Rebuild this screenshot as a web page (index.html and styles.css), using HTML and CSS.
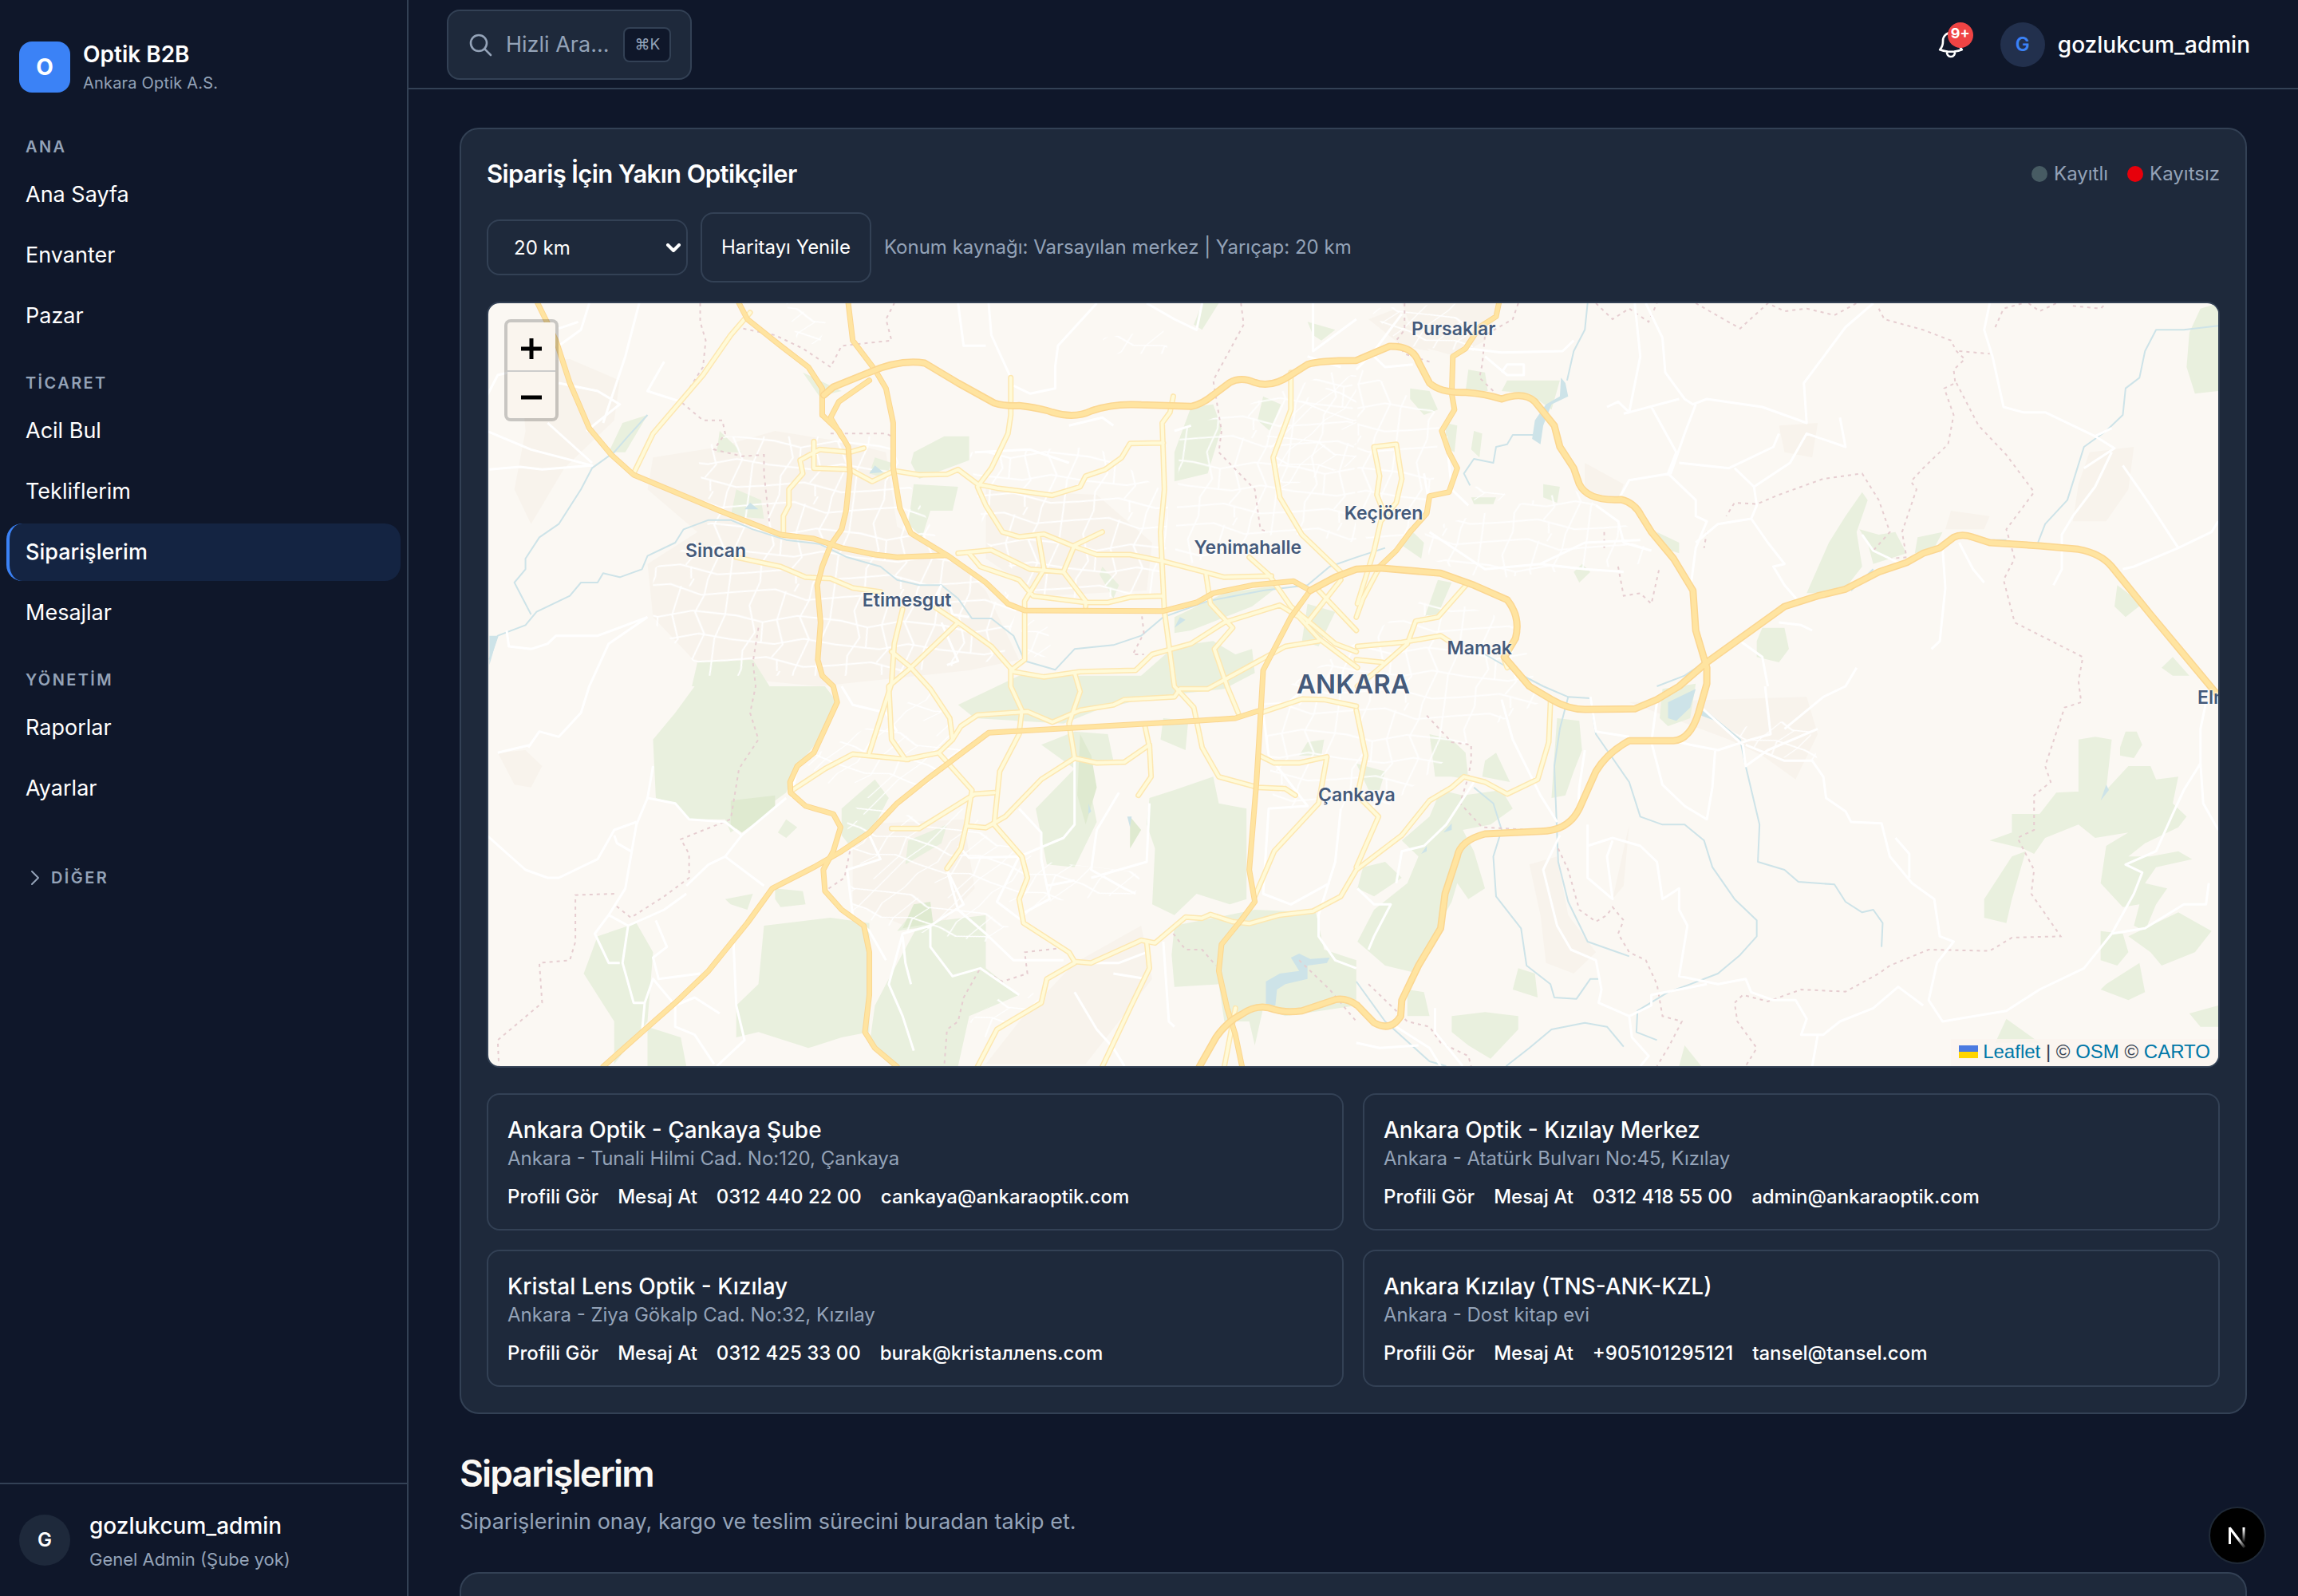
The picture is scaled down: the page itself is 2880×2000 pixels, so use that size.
FILE: index.html
```html
<!DOCTYPE html>
<html lang="tr">
<head>
<meta charset="utf-8">
<title>Optik B2B - Siparişlerim</title>
<link rel="stylesheet" href="styles.css">
</head>
<body>
<div class="app">
  <aside class="sidebar">
    <div class="brand">
      <div class="brand-logo">O</div>
      <div class="brand-text">
        <strong class="brand-name">Optik B2B</strong>
        <span class="brand-org">Ankara Optik A.S.</span>
      </div>
    </div>
    <nav class="nav">
      <h2 class="nav-label">ANA</h2>
      <a class="nav-item" href="#">Ana Sayfa</a>
      <a class="nav-item" href="#">Envanter</a>
      <a class="nav-item" href="#">Pazar</a>
      <h2 class="nav-label">TİCARET</h2>
      <a class="nav-item" href="#">Acil Bul</a>
      <a class="nav-item" href="#">Tekliflerim</a>
      <a class="nav-item active" href="#">Siparişlerim</a>
      <a class="nav-item" href="#">Mesajlar</a>
      <h2 class="nav-label">YÖNETİM</h2>
      <a class="nav-item" href="#">Raporlar</a>
      <a class="nav-item" href="#">Ayarlar</a>
      <button class="nav-more" type="button">
        <svg width="24" height="24" viewBox="0 0 24 24" fill="none" stroke="currentColor" stroke-width="2" stroke-linecap="round" stroke-linejoin="round"><path d="M8 4l8 8-8 8"/></svg>
        DİĞER
      </button>
    </nav>
    <div class="account">
      <div class="avatar avatar-lg">G</div>
      <div class="account-text">
        <span class="account-name">gozlukcum_admin</span>
        <span class="account-role">Genel Admin (Şube yok)</span>
      </div>
    </div>
  </aside>

  <div class="page">
    <header class="topbar">
      <button class="search" type="button">
        <svg width="32" height="32" viewBox="0 0 32 32" fill="none" stroke="currentColor" stroke-width="2.6" stroke-linecap="round"><circle cx="14" cy="14" r="10"/><path d="M21.400 21.400L29 29"/></svg>
        <span class="search-text">Hizli Ara...</span>
        <kbd class="kbd">⌘K</kbd>
      </button>
      <div class="topbar-right">
        <button class="bell" type="button" aria-label="Bildirimler">
          <svg width="40" height="40" viewBox="0 0 24 24" fill="none" stroke="currentColor" stroke-width="1.600" stroke-linecap="round" stroke-linejoin="round"><path d="M14.857 17.082a23.848 23.848 0 0 0 5.454-1.310A8.967 8.967 0 0 1 18 9.750V9A6 6 0 0 0 6 9v.750a8.967 8.967 0 0 1-2.312 6.022c1.733.640 3.560 1.085 5.455 1.310m5.714 0a24.255 24.255 0 0 1-5.714 0m5.714 0a3 3 0 1 1-5.714 0"/></svg>
          <span class="bell-count">9+</span>
        </button>
        <button class="user" type="button">
          <span class="avatar avatar-sm">G</span>
          <span class="user-name">gozlukcum_admin</span>
        </button>
      </div>
    </header>

    <main class="content">
      <section class="panel">
        <div class="panel-head">
          <h2 class="panel-title">Sipariş İçin Yakın Optikçiler</h2>
          <ul class="legend">
            <li><span class="dot dot-known"></span>Kayıtlı</li>
            <li><span class="dot dot-unknown"></span>Kayıtsız</li>
          </ul>
        </div>
        <div class="filters">
          <div class="select-wrap">
            <select class="select" aria-label="Yarıçap"><option>20 km</option></select>
            <svg class="select-arrow" width="20" height="12" viewBox="0 0 20 12" fill="none" stroke="currentColor" stroke-width="4" stroke-linecap="round" stroke-linejoin="round"><path d="M3 2l7 7 7-7"/></svg>
          </div>
          <button class="refresh" type="button">Haritayı Yenile</button>
          <span class="source">Konum kaynağı: Varsayılan merkez | Yarıçap: 20 km</span>
        </div>

        <div class="map">
          <svg class="map-art" viewBox="3 0 3119 2868" preserveAspectRatio="none" aria-hidden="true">
            <defs>
              <pattern id="streets" width="190" height="330" patternUnits="userSpaceOnUse" patternTransform="rotate(6)">
                <path class="street thin" d="M0 40L60 25 120 60 190 40M0 130L50 150 110 120 190 130M0 220L80 230 130 205 190 220M0 300L70 280 140 310 190 300M30 0L20 90 40 190 25 260 30 330M80 30L75 140 95 230 80 280M125 60L115 125 140 205 125 330M125 0L125 60M165 0L170 130 160 220 165 330M95 30L100 0M95 330L90 285M50 150L55 225"/>
              </pattern>
              <pattern id="streets-tilt" width="190" height="330" patternUnits="userSpaceOnUse" patternTransform="rotate(28) scale(.8)">
                <path class="street thin" d="M0 40L60 25 120 60 190 40M0 130L50 150 110 120 190 130M0 220L80 230 130 205 190 220M30 0L20 90 40 190 25 260 30 330M80 30L75 140 95 230 80 280M125 60L115 125 140 205 140 330M165 0L170 130 160 220 165 330"/>
              </pattern>
            </defs>

            <!-- built-up areas -->
            <g class="urban">
              <path d="M60 220L150 210 240 290 230 440 140 620 80 830 50 700 70 480zM300 580L420 540 520 480 640 520 720 560 740 840 830 940 900 1080 960 1340 870 1380 600 1440 400 1400 300 1180 290 980 380 860 290 700z"/>
              <path d="M1650 0L1830 0 1800 140 1750 200 1680 160zM1590 60L1640 20 1700 180 1650 160zM900 700L1100 720 1200 900 1190 1080 1000 1100 900 960zM2060 1500L2380 1480 2400 1620 2360 1790 2300 1700 2240 1640zM1880 2110L1930 2080 1950 2300 2000 2440 1960 2520 1910 2480 1900 2300z"/>
              <path d="M660 1960L860 1940 880 2200 800 2380 660 2260zM1060 2480L1180 2340 1200 2540 1080 2860 900 2860 960 2700zM20 1690L70 1680 100 1740 80 1820 50 1810zM2890 560L2970 540 2960 700 2920 820 2860 820 2870 680zM2330 460L2400 450 2390 580 2340 560zM1980 600L2050 680 2040 740 1980 700zM2640 780L2710 800 2700 850 2630 850zM2060 1960L2050 2190 2030 2240z"/>
            </g>

            <!-- woods and parks -->
            <g class="green">
              <path d="M375 1440L610 1440 632 1500 600 1640 560 1740 540 1840 440 1990 430 1940 365 1940 340 1880 305 1860 300 1640 340 1540zM380 1350L480 1340 510 1440 370 1440zM420 480L460 560 415 560zM290 420L250 560 220 560 245 450zM450 700L495 740 500 810 440 800zM770 560L825 500 870 500 870 590 780 660 765 600zM770 680L850 690 840 780 800 780 785 880 760 830zM570 260L640 330 600 350zM700 580L730 600 720 660 690 640z"/>
              <path d="M1270 390L1310 380 1325 470 1300 640 1240 670 1240 560zM1400 350L1432 380 1412 480 1390 440zM1290 0L1320 0 1290 100 1275 80zM1480 70L1530 100 1505 140 1490 120zM1110 990L1140 1060 1130 1110 1105 1020zM1240 1180L1330 1090 1430 1060 1380 1140 1270 1230 1240 1240zM1350 1320L1380 1300 1385 1390 1330 1450 1200 1480 1100 1530 1040 1580 880 1560 850 1510 960 1400 1180 1400 1240 1290 1310 1270zM1480 1130L1530 1160 1500 1290 1470 1270z"/>
              <path d="M1000 1660L1060 1610 1120 1620 1130 1720 1080 1740 1100 1950 1060 2120 1010 2110 990 1900 1060 1750zM1220 1560L1265 1570 1260 1680 1215 1640zM1195 1860L1240 1830 1310 1780 1320 1880 1370 1900 1370 2240 1340 2260 1280 2220 1240 2300 1200 2260 1205 2050 1190 1960zM1240 2340L1385 2280 1495 2290 1510 2430 1568 2470 1568 2640 1440 2680 1400 2650 1385 2790 1375 2700 1330 2700 1320 2560 1240 2570 1235 2450zM1480 1650L1510 1640 1505 1700 1465 1700z"/>
              <path d="M640 1900L700 1790 725 1860 700 1960 655 2040 640 2000zM540 1940L560 1970 540 2010 525 1990zM520 2200L570 2210 575 2260 530 2270 520 2240zM430 2240L480 2220 470 2280 440 2260zM760 2020L830 1960 820 2030 755 2110zM500 2340L620 2310 690 2330 690 2740 640 2760 580 2800 490 2740 450 2760 450 2640 490 2560zM780 2260L800 2260 800 2340 740 2360zM720 2560L780 2330 900 2300 900 2500 960 2600 870 2680 850 2868 730 2868 690 2790 700 2640zM200 2380L270 2330 300 2440 290 2700 230 2860 230 2700 175 2520zM290 2720L350 2760 360 2868 290 2868z"/>
              <path d="M1665 320L1700 330 1715 400 1690 420 1665 360zM1840 290L1935 290 1920 400 1880 340 1830 330zM1770 250L1800 260 1805 330 1765 330zM1730 450L1750 460 1745 560 1728 540zM1780 480L1795 490 1790 580 1775 550zM1905 680L1935 690 1930 750 1905 730zM1775 730L1820 730 1815 755 1780 755zM1670 860L1690 900 1685 960 1650 910zM1715 1040L1740 1050 1715 1170 1692 1175zM1960 1010L1975 980 1990 1010 1970 1050zM2110 860L2150 900 2150 940 2120 920z"/>
              <path d="M2480 710L2490 740 2470 860 2480 990 2450 1070 2400 1090 2380 1090 2420 900 2450 800zM2475 850L2510 870 2540 860 2560 940 2500 980 2490 900zM2580 880L2625 860 2610 920 2575 940zM2300 1220L2340 1220 2348 1300 2330 1350 2290 1330 2290 1270zM2940 1060L2985 1130 2955 1180 2935 1140zM3040 1330L3070 1400 3040 1400 3020 1370zM3090 20L3122 0 3122 330 3080 340 3065 240 3070 110z"/>
              <path d="M2120 1450L2180 1430 2170 1560 2130 1590 2115 1560zM1700 1620L1740 1640 1765 1690 1770 1790 1740 1780 1710 1780zM1800 1720L1820 1690 1845 1800 1795 1780zM1930 1560L1970 1570 1975 1680 1960 1760 1945 1850 1920 1860 1925 1700zM1760 1850L1830 1830 1850 1900 1810 1960 1760 1980 1780 2060 1800 2200 1770 2240 1750 2180 1740 2250 1700 2400 1680 2520 1620 2490 1570 2400 1600 2280 1660 2180 1680 2080 1650 2020 1700 1930 1720 1830zM1580 2120L1620 2100 1650 2160 1600 2230 1570 2200zM1660 2580L1690 2590 1700 2680 1660 2680zM1860 2500L1890 2520 1895 2610 1850 2580zM1740 2680L1800 2665 1860 2680 1860 2730 1810 2840 1770 2790 1740 2740z"/>
              <path d="M2870 1640L2900 1630 2930 1640 2920 1830 2870 1860zM2945 1670L2955 1610 2975 1610 2985 1660 2970 1710 2945 1700zM2920 1830L2960 1740 3000 1740 3010 1790 3050 1780 3040 1880 3065 1930 3050 1970 2990 2030 2960 2080 3000 2080 3050 2060 3075 2090 3010 2120 2990 2180 3030 2200 3010 2260 2990 2360 2970 2340 2980 2260 2950 2270 2910 2180 2920 2040 2960 1990 2900 2010 2870 1960 2810 2010 2790 2070 2770 2050 2710 2020 2750 1990 2750 1920 2800 1920 2830 1840zM2750 2080L2775 2060 2750 2240 2740 2330 2700 2310 2700 2240zM2960 2380L2990 2350 3050 2290 3110 2360 3080 2440 3020 2490 3000 2440zM2910 2360L2950 2370 2960 2440 2940 2490 2910 2470zM2920 2560L2980 2480 2990 2590 2960 2620 2910 2580zM3070 2670L3122 2640 3122 2720 3090 2720zM2740 2690L2800 2780 2720 2780zM2160 2790L2190 2868 2150 2868zM1568 1730L1620 1760 1610 1830 1590 1830z"/>
            </g>
            <g class="green-deep">
              <path d="M440 1870L520 1850 520 1900 460 1990 440 1960zM770 2260L800 2250 805 2330 750 2350zM1070 1620L1090 1700 1100 1820 1080 1960 1065 1850zM1160 1930L1180 1980 1160 2050z"/>
            </g>

            <!-- local street texture in the dense districts -->
            <path fill="url(#streets)" d="M430 500L720 500 820 920 960 1120 930 1340 700 1400 400 1400 300 1200 300 1000 400 860 380 560zM870 560L1100 540 1230 720 1220 1100 1000 1110 900 900z"/>
            <path fill="url(#streets)" opacity=".9" d="M1250 480L1560 230 1568 900 1430 860 1240 1000zM1570 240L1720 420 1700 820 1600 960 1570 800zM1690 850L1960 700 2100 900 2080 980 1880 1020 1800 1040 1700 960zM1400 1500L1700 1100 1860 1200 1900 1500 1800 1600 1620 1900 1420 1900z"/>
            <path fill="url(#streets-tilt)" d="M650 1950L860 1900 960 2060 1010 2100 1180 2140 1170 2220 1010 2250 900 2400 760 2360 660 2300zM570 1720L720 1560 800 1440 860 1700 700 1960zM1400 440L1568 260 1568 600 1430 700zM1590 20L1760 0 1780 180 1650 160zM2240 1600L2380 1560 2400 1720 2300 1700zM870 2700L970 2540 1000 2640 900 2760z"/>
            <path fill="url(#streets-tilt)" d="M540 0L620 0 600 160 560 140zM1110 130L1220 100 1230 190 1120 190zM960 1180L1010 1200 1020 1330 970 1330zM1780 690L1830 680 1840 740 1780 750z"/>

            <!-- rivers, lakes -->
            <g class="river">
              <path d="M290 420L255 500 230 560 190 620 170 700 130 830 95 880 70 960 70 1000 50 1050 80 1170"/>
              <path d="M5 1340L20 1250 70 1210 90 1160 150 1100 170 1050 200 1050 210 1015 240 1030 280 1000 290 950 340 900 355 850 400 815 440 815 480 850 540 890 600 905 650 955 710 990 740 1040 780 1060 820 1060 850 1110 875 1185 910 1185 950 1250 970 1345 1025 1378 1060 1300 1130 1285 1180 1250 1220 1180 1300 1120 1400 1080 1480 1060 1520 990 1568 955 1620 920"/>
              <path d="M1985 0L1980 100 1960 180 1948 290M1890 495L1850 495 1840 530 1820 540 1815 600 1780 585 1762 640 1773 685M3122 85L3060 100 3010 100 2990 180 2980 280 2955 320 2950 420 2920 480 2880 540 2865 640 2850 740 2810 830 2797 900M2690 890L2740 890M1800 1320L1850 1380 1905 1440 1950 1480 1990 1485 2000 1620 2030 1710 2060 1800 2080 1930 2120 1960 2160 1960 2195 2020 2210 2120 2250 2240 2290 2320 2290 2380 2260 2450 2220 2520 2170 2560 2130 2590 2075 2660 2073 2740 2110 2770M2190 1520L2260 1640 2270 1740 2295 1960 2292 2100 2340 2130 2365 2175 2430 2185 2450 2250 2480 2290 2500 2280 2517 2330 2515 2420M1950 1480L1935 1600 1925 1740 1932 2100 1950 2250 1985 2400 2060 2455M1780 1820L1815 1880 1830 1980 1815 2080 1820 2230 1865 2350 1875 2490 1918 2560 1925 2610 1965 2615 1990 2540 2005 2540M1568 2550L1620 2700 1700 2850 1730 2868M1838 2868L1880 2800 1920 2730 1980 2705 2020 2720 2050 2795M2110 1440L2160 1400 2260 1260 2340 1150 2360 1130M2460 1080L2500 1000"/>
            </g>
            <g class="water">
              <path d="M1937 280L1945 300 1950 350 1920 380 1905 460 1900 530 1885 510 1890 440 1910 380 1935 350zM2130 1500L2180 1450 2170 1520 2145 1570 2130 1560zM2190 1520L2215 1570 2190 1550zM1405 2640L1405 2550 1430 2520 1465 2510 1450 2460 1465 2445 1485 2465 1520 2460 1515 2480 1480 2490 1480 2540 1440 2560 1425 2580 1422 2640zM1085 1880L1090 1910 1085 1920zM1155 1930L1163 1930 1160 1970zM2910 1870L2925 1830 2920 1810zM1725 1990L1740 1955 1740 1980zM1685 2070L1695 2040 1695 2060zM690 640L700 610 715 635zM465 775L475 750 490 775zM1240 1220L1250 1180 1260 1190zM5 1360L5 1250 20 1250z"/>
            </g>

            <!-- district boundaries -->
            <g class="boundary">
              <path d="M385 0L385 70 395 140 390 240 350 370 390 440 425 440 430 490 410 550 460 575 500 570 500 640 510 830M450 90L520 120 570 170 620 240 640 160 730 140 720 60 735 0M620 490L720 490 730 500M1360 0L1365 80 1310 290 1325 480 1320 560 1385 700 1395 850 1410 860M1655 0L1655 100 1640 140 1655 190 1700 220M490 1220L480 1350 485 1440 475 1540 490 1640 455 1750 440 1940 350 2015 365 2070 365 2160 320 2230 260 2310 230 2260M230 2220L160 2225 160 2400 150 2470 95 2480 100 2630 60 2700 20 2770 22 2868M655 2060L645 2160 610 2210M1040 2423L970 2440 975 2520 930 2550 890 2500 860 2610 850 2700 830 2730 825 2868M1238 2370L1260 2430 1290 2430 1315 2490M1180 1150L1185 1240 1165 1320 1185 1320"/>
              <path d="M1860 0L1850 60 1800 120 1795 230 1790 280 1815 330M2000 0L2030 60 2060 20 2095 70 2110 0M2180 0L2205 30 2260 95 2310 0 2340 30 2380 20 2430 45 2470 0M2510 20L2520 60 2590 100 2640 140 2650 180 2665 210 2645 250 2648 300 2628 320 2645 420 2635 530 2590 620 2568 670 2578 700 2552 860 2560 955 2530 960 2500 930 2530 860 2510 740 2480 640 2410 660 2330 720 2290 755 2250 750 2235 800M2200 860L2195 920M2015 860L2015 920M2040 990L2050 1100 2080 1090 2100 1130 2115 990M2650 300L2690 460 2740 570 2790 710 2740 850 2755 960 2735 1040 2755 1200 2878 1330 2870 1420 2875 1500 2845 1520 2810 1740 2820 1800 2790 1850 2790 1980 2760 2010 2790 2130 2785 2220 2838 2380 2750 2385 2710 2435 2600 2430 2530 2490 2510 2520 2450 2588 2370 2580 2310 2625 2265 2600 2250 2630 2255 2700 2290 2800 2270 2868M2655 180L2710 190M2720 90L2735 20 2770 0M2780 0L2800 30 2830 0M2860 10L2910 20 2920 0M1695 1550L1740 1650 1775 1660 1775 1720 1770 1780 1755 1880 1795 1970 1880 1980M1932 2050L1950 2130 1970 2280 2000 2325 2020 2300 2030 2270 2050 2320 2040 2370 2060 2440 2090 2470 2110 2560 2120 2680 2155 2700 2130 2800 2110 2868M1590 2560L1660 2700 1700 2720 1720 2780 1770 2830 1775 2868M1465 2470L1520 2580 1568 2700"/>
            </g>

            <!-- minor roads -->
            <g class="street">
              <path d="M275 0L250 200 210 450M165 70L130 95M320 220L290 330 350 370M0 480L80 550 190 610 100 625 60 615 5 625M130 300L200 330 240 380 180 480M110 450L190 600M185 0L170 100 110 190 95 170 80 240 20 270 0 350M20 1690L80 1660M300 1740L290 1860 270 1960 250 2200 220 2300 195 2370 220 2480 240 2480M0 2000L70 2130 110 2160 130 2160 200 2090 230 1980 270 1950M290 1860L340 1880 365 1940 430 1950 460 2000 540 1860M230 2000L235 2030 260 2060M460 2000L430 2080 500 2190M430 2080L400 2110 360 2190M220 2300L255 2340 320 2280 360 2220M255 2340L245 2480 265 2630 285 2630 280 2740M305 2320L325 2420 300 2460 310 2540 385 2520M285 2630L300 2540 340 2640 375 2610 420 2670M445 2400L450 2640 465 2770 415 2868M340 2640L340 2720 375 2750 410 2860M36 1230L40 1290 80 1300 110 1280 125 1250 200 1250 290 1180M290 1180L220 1280 185 1440 170 1540 130 1630 95 1610 75 1670"/>
              <path d="M850 0L860 160 900 160M905 0L910 120 945 280M1100 0L1030 160 1025 240 1025 320 980 340 950 310M1190 0L1240 60 1280 100 1290 0M1240 480L1270 460M1050 460L1110 430 1130 460M880 560L980 550 1050 600M830 1100L840 1170 870 1180M830 1360L850 1345 820 1200M640 1440L660 1510 720 1540 740 1610M800 1140L820 1060M1490 0L1490 180 1568 60M1540 240L1480 200M550 1860L560 1740 600 1660M690 2000L710 2090 650 2130 660 2300 690 2360 720 2470M850 2040L870 2085 960 2080 1040 2010 1060 1960 1060 1720M960 1900L1000 1990 1000 2090 1015 2240 970 2290M830 2130L860 2260 800 2340 750 2370 725 2560 750 2680 770 2810M800 2340L800 2420 840 2530 890 2500 960 2600M830 2130L850 2280 900 2370 950 2470 1040 2470M1140 1840L1100 1980 1090 2130 1150 2200 1170 2220M1195 1880L1190 2100 1090 2160M1060 2170L1010 2190 1015 2240M960 2080L920 2250 990 2360M1060 2480L1140 2480 1190 2440M1130 2520L1190 2540M1220 2400L1230 2700 1240 2720M1060 2590L1100 2730 1130 2800 1150 2868M750 2380L755 2480 765 2560M1400 1540L1410 1700 1480 1890 1410 1900 1400 2220 1450 2260 1520 2180M1540 1900L1530 2100 1500 2300 1500 2380 1530 2470 1568 2500"/>
              <path d="M1650 40L1600 180 1568 250M1770 170L1830 185 1940 180 1960 140M1800 200L1840 270 1870 270 1870 230 1840 230 1830 260M1590 180L1620 240 1670 230M2070 0L2080 200 2060 410 2050 415M2090 0L2120 130 2125 260 2160 360 2175 380 2200 360 2300 390 2380 450 2375 300 2450 90 2500 0M2020 390L2040 370 2060 410 2150 360M2180 380L2160 490 2135 640 2060 665 2040 740M2100 390L2145 560 2130 640 2180 740 2180 800 2200 820 2180 920 2170 1080M2150 600L2240 620 2320 540 2330 490M2250 620L2285 690 2350 600 2380 490 2450 540 2440 430M2285 690L2290 760 2280 810 2220 830 2180 900M2280 810L2310 900 2340 980 2320 990 2340 1060 2365 1120M2710 0L2700 100 2715 200 2735 390 2770 410 2810 410 2900 500 2935 545 2880 620M2900 500L2930 470M2950 610L3000 760 3050 920 2970 990 2950 1000M3050 920L3110 860 3122 820M2930 560L2900 690 2860 800 2840 870 2840 1000 2825 1060M2655 900L2680 1000 2700 1050M2625 920L2630 1070 2620 1270 2605 1300M2550 980L2500 930 2480 870M2260 1270L2300 1330 2310 1440M2330 1200L2370 1210 2390 1230M2470 1370L2450 1440 2410 1480 2340 1600M1700 860L1800 1000 1900 980 1980 900 2080 890M1900 980L1980 1000 2050 1010M2000 760L2040 820 2050 900 2100 930"/>
              <path d="M2190 1520L2265 1660 2270 1740 2310 1680 2400 1600M2305 1440L2315 1620 2280 1640 2220 1680 2170 1660 2130 1640M2270 1660L2340 1720 2390 1720 2410 1780 2415 1860 2450 1910 2460 1950 2515 1955 2530 2080 2570 2180 2610 2240 2620 2380 2645 2400 2615 2480 2600 2620 2625 2700 2740 2660 2800 2580 2880 2500 2930 2370 2990 2350 3060 2260 3100 2260 3105 2180M2540 2010L2565 2070 2565 2160M2930 2370L2970 2220 2985 2140 2955 2110 3010 2060 3040 1920 3060 1830 3090 1730 3090 1600 3100 1500M3090 1730L3095 1880 3122 1980M2100 1650L2120 1810 2160 1890 2200 1940 2210 1820 2215 1680M1985 2040L2030 2010 2080 2040 2110 2100 2115 2170 2120 2240 2150 2200 2150 2280 2165 2340 2150 2530 2220 2560 2270 2540 2280 2590 2320 2620 2360 2620 2380 2690 2370 2750 2410 2750 2440 2700 2500 2650 2545 2570 2590 2640M2030 2020L2020 2080 2030 2240 1985 2160 1985 1960M1935 2000L1905 2130 1930 2340 1955 2430 2000 2470 2010 2580 2005 2630 2060 2680 2100 2640 2100 2600 2200 2560M2060 2680L2065 2760 2095 2830 2080 2868M2400 2750L2390 2868M1570 2200L1600 2260 1630 2260 1600 2380 1590 2430M1780 1800L1730 1960 1690 2040 1650 2060 1640 2180M1830 1490L1850 1640 1900 1850 1930 1950M1990 1480L2000 1610 2060 1630M2110 1500L2100 1650M1980 1680L1970 1820 1968 1900M1568 2780L1610 2800 1680 2790M1640 2720L1700 2800 1720 2868M1710 2650L1710 2740 1760 2868M1730 500L1740 700 1770 760M1690 640L1700 760M1480 1440L1440 1510"/>
            </g>

            <!-- secondary roads: casing, then fill -->
            <g class="secondary-case">
              <path id="sec-a" d="M475 35L440 120 390 270 300 490 265 640M945 280L945 420 940 490 910 620 885 690 900 760 930 860 960 878 1005 868 1060 915 1100 945 1160 945 1220 970 1330 1030 1415 1025M885 680L920 695 1020 722 1070 690 1080 650 1115 625 1145 580 1160 527 1220 525M1238 350L1232 410 1218 450 1222 700 1215 860 1222 1157 1240 1440 1275 1520 1290 1670 1320 1780 1390 1820 1440 1825 1458 1850M590 520L590 620 655 625 695 670 735 630 780 645 830 643 850 625 885 680M680 545L655 560 600 550 565 590 570 640 545 700 545 760 535 800 535 865M450 955L530 990 575 1030 620 1035 660 1070 710 1085M850 940L910 928 980 1000 1040 1010 1060 910 1110 860M870 940L890 990 960 1040 985 1100 1080 1125 1120 1125 1160 1105 1220 1100M995 880L1005 1000 970 1120 970 1340 945 1380 945 1440 965 1530 960 1620 925 1760 915 1960 965 2080 975 2160 960 2240 968 2330 1050 2440 1060 2475 1090 2480 1180 2395 1205 2405 1260 2308 1290 2312 1305 2298 1345 2325 1375 2332 1430 2300 1490 2285 1540 2230 1568 2130 1650 2000 1700 1870 1740 1820 1762 1780 1800 1800 1840 1845 1895 1790 1915 1650 1918 1500"/>
              <path id="sec-b" d="M810 1145L850 1200 910 1290 950 1385 1005 1405 1070 1385 1170 1380 1200 1320 1270 1280 1330 1200 1430 1135 1465 1180 1500 1260 1570 1370M750 1150L735 1280 730 1430 690 1690M850 1200L765 1370 725 1440 730 1640 755 1715 815 1690 840 1640 855 1590 885 1548 975 1535 1020 1575 1070 1530 1130 1510 1150 1490 1240 1480 1250 1450 1300 1450 1370 1370 1440 1290 1500 1270M1040 1010L1080 1120 1080 1140M730 1310L765 1370 800 1450 835 1560 840 1640M548 1835L610 1750 660 1695 760 1715M815 1690L875 1830 865 1960 855 2050 830 2125M730 1975L780 1975 880 1845 915 1840M865 1965L900 1972 935 1930 1000 1790 1060 1710 1100 1728 1150 1725 1195 1660 1198 1780 1175 1850M1187 1590L1195 1670M1060 1710L1050 1580 1070 1460 1060 1390M1060 2480L1010 2540 1000 2630 920 2730 885 2870M1190 2400L1195 2500 1160 2650 1110 2870"/>
              <path id="sec-c" d="M1450 260L1450 400 1418 580 1430 730 1470 870 1540 1010M1375 955L1410 1020 1450 1140 1530 1280 1568 1310M1600 540L1640 530 1650 660 1640 750 1612 820 1600 930 1570 1130M1600 545L1610 650 1605 720 1620 800M1608 1000L1580 1110 1568 1180M1500 1080L1568 1230M1540 1040L1480 1200M1570 1290L1650 1275 1720 1250 1735 1270M1770 1050L1715 1180 1675 1195 1660 1280 1600 1390 1570 1440M1568 1340L1615 1350M1568 1530L1585 1700 1570 1850 1608 1930 1568 2120M1393 1700L1420 1728 1465 1728 1515 1705 1500 1880 1420 2060 1385 2230M1297 1020L1305 1130 1345 1220 1312 1300 1335 1440 1355 1540M1395 1540L1470 1488 1510 1490 1568 1515M1833 1330L1840 1370M1350 2650L1330 2870"/>
            </g>
            <g class="secondary">
              <use href="#sec-a"/><use href="#sec-b"/><use href="#sec-c"/>
            </g>

            <!-- trunk roads -->
            <g class="trunk-case">
              <path id="trunk-a" d="M92 0L125 140 150 300 185 470 225 570 265 645 420 780 530 870 590 885 640 920 700 945 740 955 830 947 900 1050 940 1130 970 1155 1220 1157 1280 1125 1310 1090 1380 1060 1455 1045 1485 1080M652 0L660 140 700 250 720 320 733 450 733 620 745 770 765 865 830 947M455 0L470 60 530 160 580 240 605 320 605 420 635 480 652 540 655 640 648 780 640 850 620 910 605 990 596 1060 602 1200 597 1340 605 1400 625 1440 632 1500 610 1600 590 1690 560 1740 547 1800 548 1840 575 1890 625 1920 638 1970 625 2060 607 2130 610 2210 640 2280 680 2340 690 2440 690 2600 682 2740 700 2800 740 2870"/>
              <path id="trunk-b" d="M1485 1080L1450 1180 1400 1380 1395 1560 1388 1800 1375 2130 1385 2250 1360 2320 1325 2410 1320 2510 1335 2650 1350 2750 1362 2870M1395 1530L1350 1560 1280 1570 960 1608 905 1615 870 1670 800 1780 740 1880 690 1990 640 2060 590 2120 515 2200 470 2330 400 2510 340 2630 280 2740 210 2870M1825 0L1820 50 1790 90 1765 170 1742 200 1740 340 1745 400 1722 480 1735 560 1750 620 1735 710 1700 725 1695 790 1665 860 1640 930 1605 1000M605 350L605 420M690 290L635 370 620 430 640 500"/>
            </g>
            <g class="trunk">
              <use href="#trunk-a"/><use href="#trunk-b"/>
            </g>

            <!-- motorways -->
            <g class="motorway-case">
              <path id="mway-a" d="M608 345L625 315 690 260Q745 210 790 225L850 300 915 375Q935 388 960 385 1000 395 1020 410 1060 435 1090 405 1130 375 1180 382L1270 388Q1290 380 1310 345L1340 298Q1360 275 1385 298 1415 320 1450 270L1480 230Q1500 215 1568 215L1628 162Q1670 160 1680 220L1700 300Q1720 338 1765 335 1800 340 1830 360 1870 330 1890 370L1925 460 1935 540 1960 620 1970 680Q1985 745 2045 738 2070 750 2082 800L2100 860 2140 960 2175 1080 2180 1230 2200 1370 2200 1430 2185 1540Q2170 1640 2140 1645L2060 1645Q2020 1690 2000 1760L1970 1900Q1950 1985 1900 1985L1800 1995Q1755 2020 1750 2080L1728 2220 1720 2350 1680 2490 1650 2620 1648 2680Q1630 2740 1600 2705L1570 2640Q1550 2610 1530 2618L1470 2660Q1440 2668 1420 2655 1390 2630 1360 2675 1335 2700 1315 2760L1285 2870"/>
              <path id="mway-b" d="M1485 1080L1530 1030 1568 1000 1610 995 1720 1015 1780 1060 1840 1115Q1865 1180 1855 1260L1835 1330 1880 1440 1920 1490Q1950 1527 1980 1527L2070 1525 2110 1490 2150 1440 2200 1350 2260 1260 2340 1140 2400 1100 2450 1075 2510 1010 2560 975 2590 940 2620 920 2645 880Q2660 865 2680 880L2710 900 2800 912 2870 925Q2910 940 2930 990L3000 1170 3060 1320 3120 1470"/>
            </g>
            <g class="motorway">
              <use href="#mway-a"/><use href="#mway-b"/>
            </g>
          </svg>

          <span class="place" style="left:55.800%;top:3.300%">Pursaklar</span>
          <span class="place" style="left:51.750%;top:27.500%">Keçiören</span>
          <span class="place" style="left:43.900%;top:32%">Yenimahalle</span>
          <span class="place" style="left:13.150%;top:32.400%">Sincan</span>
          <span class="place" style="left:24.200%;top:38.900%">Etimesgut</span>
          <span class="place" style="left:57.300%;top:45.200%">Mamak</span>
          <span class="place place-city" style="left:50%;top:49.900%">ANKARA</span>
          <span class="place" style="left:50.200%;top:64.400%">Çankaya</span>
          <span class="place place-edge" style="left:98.800%;top:51.700%">Elmadağ</span>

          <div class="zoom">
            <button type="button" aria-label="Yakınlaştır"><svg width="28" height="28" viewBox="0 0 28 28" stroke="currentColor" stroke-width="5"><path d="M1 14h26M14 1v26"/></svg></button>
            <button type="button" aria-label="Uzaklaştır"><svg width="28" height="28" viewBox="0 0 28 28" stroke="currentColor" stroke-width="5"><path d="M1 14h26"/></svg></button>
          </div>
          <div class="attribution">
            <a href="#"><svg width="24" height="16" viewBox="0 0 12 8"><path fill="#4c7be1" d="M0 0h12v4H0z"/><path fill="#ffd500" d="M0 4h12v4H0z"/></svg> Leaflet</a> | © <a href="#">OSM</a> © <a href="#">CARTO</a>
          </div>
        </div>

        <div class="shops">
          <article class="shop">
            <h3 class="shop-name">Ankara Optik - Çankaya Şube</h3>
            <p class="shop-address">Ankara - Tunali Hilmi Cad. No:120, Çankaya</p>
            <div class="shop-links"><a href="#">Profili Gör</a><a href="#">Mesaj At</a><a href="#">0312 440 22 00</a><a href="#">cankaya@ankaraoptik.com</a></div>
          </article>
          <article class="shop">
            <h3 class="shop-name">Ankara Optik - Kızılay Merkez</h3>
            <p class="shop-address">Ankara - Atatürk Bulvarı No:45, Kızılay</p>
            <div class="shop-links"><a href="#">Profili Gör</a><a href="#">Mesaj At</a><a href="#">0312 418 55 00</a><a href="#">admin@ankaraoptik.com</a></div>
          </article>
          <article class="shop">
            <h3 class="shop-name">Kristal Lens Optik - Kızılay</h3>
            <p class="shop-address">Ankara - Ziya Gökalp Cad. No:32, Kızılay</p>
            <div class="shop-links"><a href="#">Profili Gör</a><a href="#">Mesaj At</a><a href="#">0312 425 33 00</a><a href="#">burak@kristaллens.com</a></div>
          </article>
          <article class="shop">
            <h3 class="shop-name">Ankara Kızılay (TNS-ANK-KZL)</h3>
            <p class="shop-address">Ankara - Dost kitap evi</p>
            <div class="shop-links"><a href="#">Profili Gör</a><a href="#">Mesaj At</a><a href="#">+905101295121</a><a href="#">tansel@tansel.com</a></div>
          </article>
        </div>
      </section>

      <div class="page-head">
        <h1 class="page-title">Siparişlerim</h1>
        <p class="page-sub">Siparişlerinin onay, kargo ve teslim sürecini buradan takip et.</p>
      </div>
      <section class="panel panel-next"></section>
    </main>
  </div>

  <button class="dev-badge" type="button" aria-label="Next.js">
    <svg width="40" height="40" viewBox="0 0 40 40" fill="none">
      <defs>
        <linearGradient id="n-diag" x1="20" y1="24" x2="30" y2="37" gradientUnits="userSpaceOnUse"><stop stop-color="#fff"/><stop offset="1" stop-color="#fff" stop-opacity="0"/></linearGradient>
        <linearGradient id="n-stem" x1="28" y1="12" x2="28" y2="29" gradientUnits="userSpaceOnUse"><stop stop-color="#fff"/><stop offset="1" stop-color="#fff" stop-opacity="0"/></linearGradient>
      </defs>
      <path stroke="#fff" stroke-width="3" d="M10.500 31V10"/>
      <path stroke="url(#n-diag)" stroke-width="3.200" d="M10.300 10.500L29 35"/>
      <path stroke="url(#n-stem)" stroke-width="3" d="M28 10v19"/>
    </svg>
  </button>
</div>
</body>
</html>
```
FILE: styles.css
```css
:root {
  --bg: #0f172a;
  --surface: #1e293b;
  --line: #334155;
  --text: #fff;
  --muted: #94a3b8;
  --accent: #3b82f6;
}

* { box-sizing: border-box; }

body {
  margin: 0;
  background: var(--bg);
  color: var(--text);
  font: 24px/32px Inter, "Noto Sans", sans-serif;
}

h1, h2, h3, p, ul { margin: 0; padding: 0; }
ul { list-style: none; }
a { color: inherit; text-decoration: none; }
button, select { font: inherit; color: inherit; }
button { padding: 0; border: 0; background: none; cursor: pointer; }

.app { display: flex; height: 100vh; overflow: hidden; }

/* Sidebar */
.sidebar {
  display: flex;
  flex-direction: column;
  flex: 0 0 512px;
  border-right: 2px solid var(--line);
}
.brand { display: flex; align-items: center; gap: 16px; padding: 52px 24px; }
.brand-logo {
  display: grid;
  place-items: center;
  width: 64px;
  height: 64px;
  border-radius: 16px;
  background: var(--accent);
  font-size: 28px;
  font-weight: 700;
}
.brand-text { display: flex; flex-direction: column; gap: 8px; }
.brand-name { font-size: 28px; font-weight: 600; line-height: 32px; }
.brand-org { color: var(--muted); font-size: 20px; line-height: 24px; letter-spacing: 0.01em; }

.nav { display: flex; flex-direction: column; gap: 4px; flex: 1; padding: 0 8px; }
.nav-label {
  margin: 28px 0 4px;
  padding-left: 24px;
  color: var(--muted);
  font-size: 20px;
  font-weight: 600;
  line-height: 32px;
  letter-spacing: 0.12em;
}
.nav-label:first-child { margin-top: 0; }
.nav-item {
  padding: 18px 20px;
  border-left: 4px solid transparent;
  border-radius: 20px;
  font-size: 27px;
  line-height: 36px;
}
.nav-item.active {
  border-left-color: var(--accent);
  background: rgba(59, 130, 246, 0.12);
  font-weight: 500;
}
.nav-more {
  display: flex;
  align-items: center;
  gap: 8px;
  margin-top: 56px;
  padding-left: 24px;
  color: var(--muted);
  font-size: 20px;
  font-weight: 600;
  line-height: 32px;
  letter-spacing: 0.12em;
}
.account {
  display: flex;
  align-items: center;
  gap: 24px;
  padding: 32px 24px;
  border-top: 2px solid var(--line);
}
.account-text { display: flex; flex-direction: column; gap: 8px; }
.account-name { font-size: 28px; font-weight: 500; line-height: 40px; }
.account-role { color: var(--muted); font-size: 22px; line-height: 28px; }

.avatar { display: grid; place-items: center; border-radius: 50%; font-weight: 600; }
.avatar-lg { width: 64px; height: 64px; background: var(--surface); font-size: 24px; }
.avatar-sm { width: 56px; height: 56px; background: #22304d; color: var(--accent); font-size: 24px; }

/* Top bar */
.page { display: flex; flex-direction: column; flex: 1; min-width: 0; }
.topbar {
  display: flex;
  align-items: center;
  justify-content: space-between;
  flex: none;
  height: 112px;
  padding: 2px 60px 0 48px;
  border-bottom: 2px solid var(--line);
}
.search {
  display: flex;
  align-items: center;
  gap: 16px;
  height: 88px;
  padding: 0 24px;
  border: 2px solid var(--line);
  border-radius: 16px;
  background: var(--surface);
  color: var(--muted);
  font-size: 27px;
}
.kbd {
  margin-left: 2px;
  padding: 4px 12px;
  border: 2px solid var(--line);
  border-radius: 8px;
  background: var(--bg);
  font: 19px/32px Inter, "DejaVu Sans", sans-serif;
}
.topbar-right { display: flex; align-items: center; gap: 42px; }
.bell { position: relative; display: grid; }
.bell-count {
  position: absolute;
  top: -8px;
  right: -8px;
  width: 32px;
  height: 32px;
  border-radius: 50%;
  background: #ef4444;
  font-size: 18px;
  font-weight: 700;
  line-height: 28px;
}
.user { display: flex; align-items: center; gap: 16px; }
.user-name { font-size: 28px; font-weight: 500; }

/* Content */
.content { flex: 1; min-height: 0; padding: 48px 64px 0; overflow: hidden; }
.panel {
  padding: 32px;
  border: 2px solid var(--line);
  border-radius: 24px;
  background: var(--surface);
}
.panel-head { display: flex; align-items: center; justify-content: space-between; height: 48px; }
.panel-title { font-size: 31px; font-weight: 600; line-height: 48px; letter-spacing: -0.02em; }
.legend { display: flex; gap: 24px; color: var(--muted); }
.legend li { display: flex; align-items: center; gap: 8px; }
.dot { width: 20px; height: 20px; border-radius: 50%; }
.dot-known { background: #475b63; }
.dot-unknown { background: #e7000b; }

.filters { display: flex; align-items: center; gap: 16px; margin: 24px 0; }
.select-wrap { position: relative; width: 252px; }
.select {
  display: block;
  width: 100%;
  height: 70px;
  padding: 2px 32px 0;
  border: 2px solid var(--line);
  border-radius: 16px;
  background: var(--surface);
  appearance: none;
}
.select-arrow { position: absolute; top: 30px; right: 8px; pointer-events: none; }
.refresh {
  height: 88px;
  padding: 0 24px;
  border: 2px solid var(--line);
  border-radius: 16px;
}
.source { color: var(--muted); }

/* Map */
.map {
  position: relative;
  height: 960px;
  border: 2px solid var(--line);
  border-radius: 16px;
  background: #fbf8f3;
  overflow: hidden;
}
.map-art { display: block; width: 100%; height: 100%; }
.map-art path, .map-art use { vector-effect: non-scaling-stroke; }
.urban { fill: #f8f3ec; }
.green { fill: #e9f0de; }
.green-deep { fill: #dfead0; }
.water { fill: #cde3e8; }
.river { fill: none; stroke: #cde3e8; stroke-width: 2px; stroke-linejoin: round; }
.boundary { fill: none; stroke: #e6cdd0; stroke-width: 2px; stroke-dasharray: 4 5; }
.street { fill: none; stroke: #fff; stroke-width: 3px; stroke-linejoin: round; }
.thin { stroke-width: 2px; }
.secondary-case, .secondary, .trunk-case, .trunk, .motorway-case, .motorway {
  fill: none;
  stroke-linecap: round;
  stroke-linejoin: round;
}
.secondary-case { stroke: #fde7b0; stroke-width: 7px; }
.secondary { stroke: #fffad8; stroke-width: 4px; }
.trunk-case { stroke: #fbd690; stroke-width: 7px; }
.trunk { stroke: #ffe4a0; stroke-width: 5px; }
.motorway-case { stroke: #fbd690; stroke-width: 9px; }
.motorway { stroke: #ffe4a0; stroke-width: 6px; }

.place {
  position: absolute;
  transform: translate(-50%, -50%);
  color: #455a7a;
  font-size: 23px;
  font-weight: 600;
  line-height: 28px;
  text-shadow: 0 0 3px #fff, 0 0 3px #fff;
}
.place-city { font-size: 33px; line-height: 40px; }
.place-edge { transform: translate(0, -50%); }

.zoom {
  position: absolute;
  top: 20px;
  left: 20px;
  border: 4px solid rgba(0, 0, 0, 0.2);
  border-radius: 8px;
  background: #faf5ee;
  background-clip: padding-box;
}
.zoom button {
  display: grid;
  place-items: center;
  width: 60px;
  height: 60px;
  padding-top: 6px;
  color: #000;
}
.zoom button + button { border-top: 2px solid #ccc; }
.attribution {
  position: absolute;
  right: 0;
  bottom: 0;
  padding: 0 10px 2px;
  background: rgba(250, 245, 238, 0.85);
  color: #333f50;
  font: 24px/32px "Liberation Sans", Arial, sans-serif;
}
.attribution a { color: #0078a8; }

/* Nearby shops */
.shops { display: grid; grid-template-columns: 1fr 1fr; gap: 24px; margin-top: 32px; }
.shop { padding: 24px; border: 2px solid var(--line); border-radius: 16px; }
.shop-name { font-size: 28px; font-weight: 500; line-height: 40px; }
.shop-address { color: var(--muted); line-height: 32px; }
.shop-links { display: flex; gap: 24px; margin-top: 16px; font-weight: 500; line-height: 32px; }

.page-head { padding: 40px 0; }
.page-title { color: #faf8f5; font-size: 46px; font-weight: 600; line-height: 68px; letter-spacing: -0.04em; }
.page-sub { margin-top: 6px; padding-bottom: 2px; color: var(--muted); font-size: 27px; line-height: 42px; }
.panel-next { height: 320px; }

.dev-badge {
  position: fixed;
  right: 40px;
  bottom: 40px;
  display: grid;
  place-items: center;
  width: 72px;
  height: 72px;
  border: 2px solid #1f2937;
  border-radius: 50%;
  background: #000;
}
```
